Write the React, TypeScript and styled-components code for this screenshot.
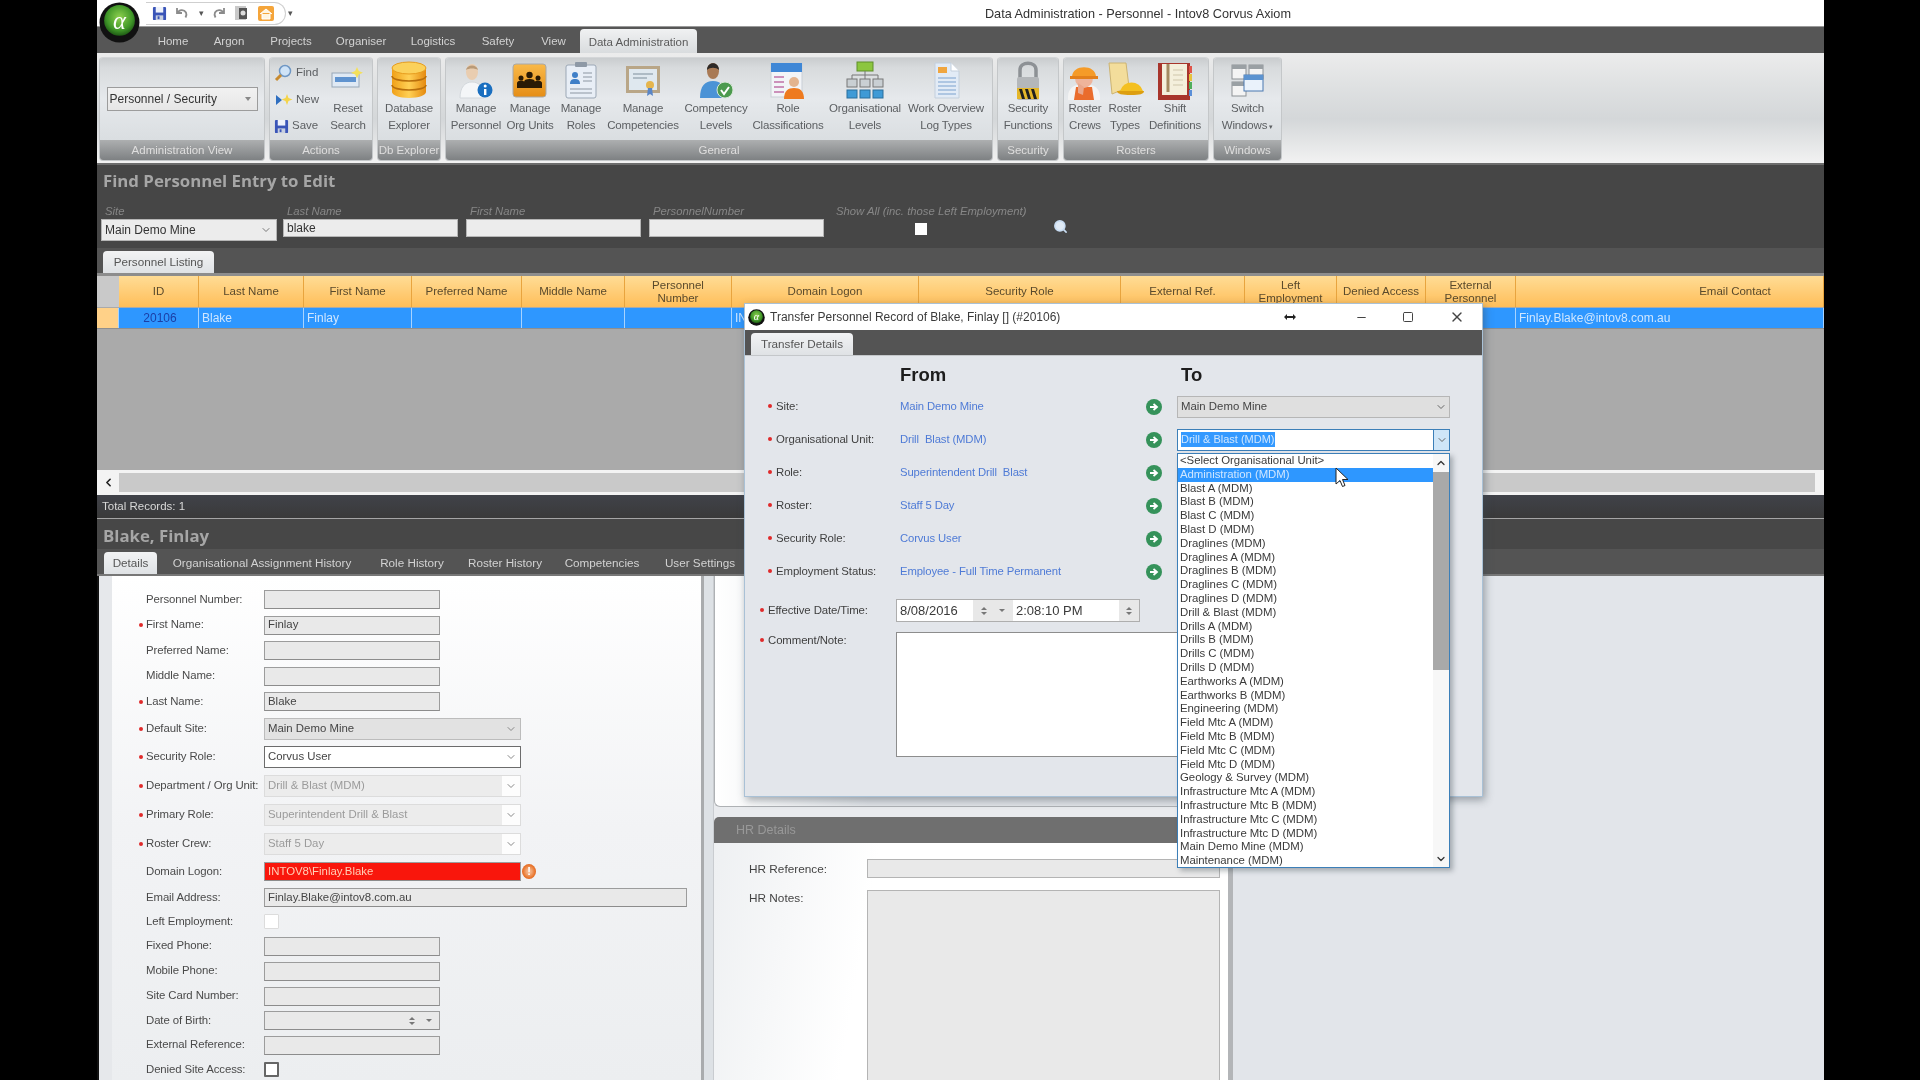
import React from "react";
import styled, { createGlobalStyle } from "styled-components";
import { ChevronDown, ChevronUp, ChevronLeft, Search, Minus, Square, X } from "lucide-react";

const Global = createGlobalStyle`
  html, body { margin: 0; padding: 0; background: #000; overflow: hidden; }
  * { box-sizing: border-box; }
`;
const Screen = styled.div`
  width: 1920px; height: 1080px; background: #000; padding-left: 97px; overflow: hidden;
`;
const Shell = styled.div`
  position: relative; width: 1727px; height: 1080px; display: flex; flex-direction: column;
  font: 12px/1.2 "Liberation Sans", Arial, sans-serif; color: #3c3c3c; background: #555;
  overflow: hidden; filter: blur(0.6px);
`;

/* title bar */
const TitleBar = styled.div`
  height: 27px; flex: none; background: #fff; display: flex; align-items: center; padding-left: 49px;
  border-bottom: 1px solid #9a9a9a;
`;
const LogoSpot = styled.div`position: absolute; left: 2px; top: 2px; width: 41px; height: 41px; z-index: 3;`;
const Qat = styled.div`
  height: 23px; width: 140px; border: 1px solid #cfcfcf; border-left: none; border-radius: 0 12px 12px 0;
  display: flex; align-items: center; gap: 8px; padding-left: 6px;
`;
const QatMore = styled.span`color: #555; font-size: 9px; margin-left: 2px;`;
const WindowTitle = styled.div`margin-left: auto; padding: 3px 533px 0 0; color: #333; font-size: 12.7px;`;

/* ribbon tabs */
const TabRow = styled.div`
  height: 26px; flex: none; background: #565656; display: flex; padding-left: 48px; align-items: flex-end;
`;
const RibbonTab = styled.div<{ $w: number; $on?: boolean }>`
  width: ${(p) => p.$w}px; height: ${(p) => (p.$on ? 24 : 26)}px; display: flex; align-items: center; justify-content: center;
  font-size: 11.5px; padding-top: 3px; color: ${(p) => (p.$on ? "#5a5a5a" : "#d2d2d2")};
  background: ${(p) => (p.$on ? "linear-gradient(#f0f1f2,#d9dcde)" : "transparent")};
  border-radius: ${(p) => (p.$on ? "4px 4px 0 0" : "0")};
`;

/* ribbon */
const Ribbon = styled.div`
  height: 110px; flex: none; display: flex; gap: 4px; padding: 4px 0 2px 2px;
  background: linear-gradient(#ececec 0%, #dfe1e2 30%, #d4d7d9 60%, #f2f2f2 100%);
`;
const Group = styled.div<{ $w: number }>`
  width: ${(p) => p.$w}px; display: flex; flex-direction: column; border-radius: 4px; overflow: hidden;
  border: 1px solid #c4c7c9; border-top-color: #d4d6d8;
`;
const GroupBody = styled.div<{ $pad?: number; $center?: boolean }>`
  flex: 1; display: flex; padding-left: ${(p) => p.$pad ?? 0}px;
  justify-content: ${(p) => (p.$center ? "center" : "flex-start")}; align-items: ${(p) => (p.$center ? "center" : "stretch")};
  background: linear-gradient(#c9ccce 0%, #d8dbdd 12%, #e6e9ec 50%, #dadee1 100%);
`;
const GroupLabel = styled.div`
  height: 20px; flex: none; display: flex; align-items: center; justify-content: center; font-size: 11.5px; color: #dedede; padding-top: 1px;
  background: linear-gradient(#adafb0, #7e8183); text-shadow: 0 0 1px #999;
`;
const RibbonItem = styled.div<{ $w: number }>`
  width: ${(p) => p.$w}px; display: flex; flex-direction: column; align-items: center; color: #5c5f62; font-size: 11.5px; white-space: nowrap;
`;
const IconBox = styled.div`height: 42px; flex: none; padding-top: 3px; display: flex; justify-content: center;`;
const Line = styled.div`height: 17px; line-height: 17px; letter-spacing: -0.15px;`;
const SmallCaret = styled.span`font-size: 7px; margin-left: 2px;`;
const ViewCombo = styled.div`
  width: 151px; height: 24px; border: 1px solid #9c9c9c; background: linear-gradient(#f1f1f1,#e6e6e6); display: flex; align-items: center;
  justify-content: space-between; padding: 0 6px 0 2px; color: #333; font-size: 12px;
`;
const Caret = styled.span`width: 0; height: 0; border-left: 3px solid transparent; border-right: 3px solid transparent; border-top: 4px solid #888;`;
const ActionCol = styled.div`width: 56px; padding: 6px 0 0 4px; display: flex; flex-direction: column; gap: 8px;`;
const ActionRow = styled.div`height: 18.5px; display: flex; align-items: center; gap: 3px; color: #5c5f62; font-size: 11.5px;`;
const ResetItem = styled(RibbonItem)`padding-top: 8px; margin-left: 0;`;
const ResetIcon = styled.div`height: 34px; flex: none;`;

/* find panel */
const FindPanel = styled.div`
  height: 85px; flex: none; background: #464646; border-top: 2px solid #6c6c6c; padding-left: 4px;
`;
const PanelHead = styled.div`
  height: 31px; display: flex; align-items: center; padding-left: 2px; font: 700 16.8px "Open Sans", "Noto Sans", sans-serif; color: #a6a6a6;
`;
const FindFields = styled.div`display: flex; align-items: flex-start; padding-top: 8px;`;
const FindField = styled.div<{ $w: number }>`width: ${(p) => p.$w}px; flex: none;`;
const FindLabel = styled.div`height: 15px; font-style: italic; font-size: 11.3px; color: #878787; padding-left: 4px; line-height: 15px; white-space: nowrap;`;
const FindInput = styled.div<{ $w: number; $h?: number }>`
  width: ${(p) => p.$w}px; height: ${(p) => p.$h ?? 18}px; background: #ececec; border: 1px solid #b5b5b5; color: #333; font-size: 12px;
  padding-left: 3px; display: flex; align-items: center; justify-content: space-between; padding-right: 4px;
`;
const ShowAllBox = styled.div`width: 12px; height: 12px; background: #fff; margin: 4px 0 0 83px;`;
const SearchSpot = styled.div`padding: 15px 0 0 71px; color: #c9ddf3;`;

const TabBand = styled.div<{ $bg?: string; $h: number; $pad: number }>`
  height: ${(p) => p.$h}px; flex: none; background: ${(p) => p.$bg ?? "#545454"}; display: flex; align-items: flex-end; padding-left: ${(p) => p.$pad}px;
`;
const SheetTab = styled.div<{ $w: number; $on?: boolean }>`
  width: ${(p) => p.$w}px; height: 22px; flex: none; display: flex; align-items: center; justify-content: center; font-size: 11.7px; white-space: nowrap;
  color: ${(p) => (p.$on ? "#555" : "#d2d2d2")};
  background: ${(p) => (p.$on ? "linear-gradient(#f2f3f4,#dfe2e5)" : "transparent")}; border-radius: 4px 4px 0 0;
`;

/* table */
const cols = "22px 80px 105px 108px 110px 103px 107px 187px 202px 124px 92px 89px 90px 308px";
const TableWrap = styled.div`height: 222px; flex: none; display: flex; flex-direction: column; background: #aaa; border-top: 3px solid #8d8d8d;`;
const HeaderRow = styled.div`display: grid; grid-template-columns: ${cols}; height: 31px; flex: none;`;
const HeadCell = styled.div<{ $corner?: boolean; $shift?: number }>`
  display: flex; align-items: center; justify-content: center; text-align: center; line-height: 13px; font-size: 11.5px; color: #5a4a2c;
  white-space: pre-line; padding-left: ${(p) => p.$shift ?? 0}px;
  background: ${(p) => (p.$corner ? "#c9c9c9" : "linear-gradient(#ffdc95,#ffbe59)")};
  border-right: 1px solid ${(p) => (p.$corner ? "#c9c9c9" : "#e8a43e")};
`;
const BodyRow = styled.div`
  display: grid; grid-template-columns: ${cols}; height: 21px; flex: none; margin-top: 1px; border-bottom: 1px solid #8f8f8f;
`;
const Cell = styled.div<{ $tone?: "id" | "marker" }>`
  display: flex; align-items: center; padding-left: 3px; font-size: 12px; white-space: nowrap; overflow: hidden;
  color: ${(p) => (p.$tone === "id" ? "#1c3fa6" : "#cfe6ff")};
  justify-content: ${(p) => (p.$tone === "id" ? "center" : "flex-start")};
  background: ${(p) => (p.$tone === "marker" ? "#ffd188" : "#2e97ff")};
  border-right: 1px solid #a7d3ff;
`;
const TableBody = styled.div`flex: 1; background: #aaa;`;
const ScrollRow = styled.div`height: 25px; flex: none; background: #f3f3f3; display: flex; align-items: center; padding-right: 9px; color: #222;`;
const ScrollArrow = styled.div`width: 22px; display: flex; justify-content: center;`;
const ScrollTrack = styled.div`flex: 1; height: 19px; background: #c9c9c9;`;

const TotalBar = styled.div`
  height: 24px; flex: none; background: linear-gradient(#404249, #3a3a3a); border-bottom: 1px solid #a5a5a5; color: #d8d8d8; font-size: 11.5px;
  display: flex; align-items: center; padding-left: 5px;
`;
const DetailHead = styled.div`
  height: 30px; flex: none; background: #474747; padding: 2px 0 0 6px; display: flex; align-items: center; font: 700 16.8px "Open Sans", "Noto Sans", sans-serif; color: #a6a6a6;
`;

/* details */
const DetailBody = styled.div`flex: 1; display: flex; min-height: 0; background: #e2e5ea; overflow: hidden; border-top: 2px solid #777;`;
const FormGutter = styled.div`width: 15px; flex: none; background: #e6e8eb; border-left: 2px solid #111;`;
const FormPanel = styled.div`width: 589px; flex: none; background: linear-gradient(#fff, #f2f3f5 50%, #eceef0); overflow: hidden; padding-left: 34px; padding-top: 11px;`;
const Splitter = styled.div`width: 13px; flex: none; background: #dde1e5; border-left: 3px solid #a9abad; border-right: 1px solid #c9ccd0;`;
const RightCol = styled.div`width: 519px; flex: none; display: flex; flex-direction: column; border-right: 5px solid #b3b5b8; background: #e9ebee;`;
const UpperPanel = styled.div`
  height: 231px; flex: none; background: linear-gradient(90deg,#fff,#dfe2e6 30%); border: 1px solid #aeb1b4; border-top: none; border-right: none; border-radius: 0 0 0 6px;
`;
const HrPanel = styled.div`flex: 1; margin-top: 10px; display: flex; flex-direction: column; min-height: 0;`;
const HrHead = styled.div`height: 26px; flex: none; background: #6f6f6f; border-radius: 5px 5px 0 0; color: #989898; font-size: 12.5px; display: flex; align-items: center; padding-left: 22px;`;
const HrBody = styled.div`
  flex: 1; background: linear-gradient(100deg,#eef0f2,#fff 30%); display: grid; grid-template-columns: 118px 353px; grid-auto-rows: min-content; row-gap: 12px; padding: 16px 0 0 35px; overflow: hidden;
`;
const HrLabel = styled.div<{ $up?: number }>`color: #444; font-size: 11.8px; line-height: 18px; padding-top: 1px; margin-top: ${(p) => -(p.$up ?? 0)}px;`;
const HrField = styled.div<{ $h: number }>`height: ${(p) => p.$h}px; background: #e9e9e9; border: 1px solid #b4b4b4;`;

const FormRow = styled.div<{ $h: number }>`height: ${(p) => p.$h}px; display: flex; align-items: center;`;
const FormLabel = styled.div<{ $req?: boolean }>`
  position: relative; width: 118px; flex: none; color: #4a4a4a; font-size: 11.4px; white-space: nowrap; letter-spacing: -0.1px;
  ${(p) => p.$req && `&::before { content: ""; position: absolute; left: -7px; top: 5px; width: 4px; height: 4px; border-radius: 50%; background: #e02a2a; }`}
`;
const TextBox = styled.div<{ $w: number; $bg?: string; $fg?: string }>`
  width: ${(p) => p.$w}px; height: 19px; display: flex; align-items: center; padding-left: 3px; font-size: 11.4px;
  background: ${(p) => p.$bg ?? "#e9e9e9"}; color: ${(p) => p.$fg ?? "#444"}; border: 1px solid #9c9c9c; border-bottom-color: #8c8c8c;
`;
const ComboBox = styled.div<{ $mode: "grey" | "white" | "off" }>`
  width: 257px; height: 22px; display: flex; align-items: center; justify-content: space-between; padding: 0 3px; font-size: 11.4px;
  color: ${(p) => (p.$mode === "off" ? "#9b9b9b" : "#444")};
  background: ${(p) => (p.$mode === "white" ? "#fff" : p.$mode === "grey" ? "#e2e2e2" : "linear-gradient(90deg,#ececec 93%,#fdfdfd 93%)")};
  border: 1px solid ${(p) => (p.$mode === "white" ? "#6c6c6c" : p.$mode === "grey" ? "#bcbcbc" : "#dcdcdc")};
`;
const ErrorDot = styled.div`
  width: 14px; height: 15px; border-radius: 50%; background: radial-gradient(#f4b183 20%, #e9762e 60%, #cf5518); margin-left: 1px;
  color: #fff; font: 700 11px/15px "Liberation Sans", sans-serif; text-align: center;
`;
const CheckBox = styled.div<{ $dark?: boolean }>`
  width: 15px; height: 15px; background: #fff; border: ${(p) => (p.$dark ? "2px solid #666" : "1px solid #dcdcdc")}; border-radius: 1px;
`;
const Spin = styled.div`display: flex; flex-direction: column; gap: 2px; align-items: center;`;
const Tri = styled.span<{ $down?: boolean }>`
  width: 0; height: 0; border-left: 3px solid transparent; border-right: 3px solid transparent;
  ${(p) => (p.$down ? "border-top: 3px solid #777;" : "border-bottom: 3px solid #777;")}
`;
const DobBox = styled(TextBox)`justify-content: flex-end; gap: 11px; padding-right: 7px;`;

/* dialog */
const Dialog = styled.div`
  position: absolute; left: 647px; top: 303px; width: 739px; height: 494px; z-index: 5; display: flex; flex-direction: column;
  background: #e3e6eb; border: 1px solid #a9c1d6; box-shadow: 2px 3px 8px rgba(60,70,80,.45);
`;
const DialogTitle = styled.div`
  height: 26px; flex: none; background: #fff; display: flex; align-items: center; padding-left: 3px; gap: 5px; font-size: 12px; color: #3b3b3b; position: relative;
`;
const DialogControls = styled.div`display: flex; align-items: center; margin-left: auto; color: #444;`;
const DialogControl = styled.div<{ $w: number }>`width: ${(p) => p.$w}px; display: flex; justify-content: center;`;
const DialogBand = styled.div`height: 26px; flex: none; background: #545454; display: flex; align-items: flex-end; padding-left: 6px; border-bottom: 1px solid #c4c7ca;`;
const HeadGrid = styled.div`height: 34px; flex: none; display: grid; grid-template-columns: 155px 281px 1fr; align-items: center; font-size: 18.5px; font-weight: 700; color: #1d1d1d; padding-top: 5px;`;
const TransferRow = styled.div`height: 33px; flex: none; display: grid; grid-template-columns: 155px 246px 16px 15px 273px; align-items: center;`;
const TransferLabel = styled.div<{ $left: number; $down?: number }>`
  position: relative; margin-left: ${(p) => p.$left}px; margin-top: ${(p) => p.$down ?? 0}px; color: #3f3f3f; font-size: 11.4px; white-space: nowrap; letter-spacing: -0.1px;
  &::before { content: ""; position: absolute; left: -8px; top: 4px; width: 4px; height: 4px; border-radius: 50%; background: #e02a2a; }
`;
const FromValue = styled.div`color: #4f7bd6; font-size: 11.3px; letter-spacing: -0.12px; white-space: pre; margin-top: 1px;`;
const GoArrow = styled.div`width: 16px; height: 16px; border-radius: 50%; background: #35925a; display: flex; align-items: center; justify-content: center;`;
const ToCombo = styled.div<{ $open?: boolean }>`
  grid-column: 5; height: 22px; display: flex; align-items: center; justify-content: space-between; font-size: 11.4px; padding-left: 3px;
  background: ${(p) => (p.$open ? "#fff" : "#dfdfdf")}; border: 1px solid ${(p) => (p.$open ? "#3c7fb8" : "#b6b6b6")}; color: #444;
`;
const Selected = styled.span`background: #3399ff; color: #cfe6ff; line-height: 15px; font-size: 11px;`;
const ComboBtn = styled.div<{ $open?: boolean }>`
  width: 16px; height: 100%; display: flex; align-items: center; justify-content: center; color: #666;
  ${(p) => p.$open && "background: #cfe6f8; border-left: 1px solid #3c7fb8;"}
`;
const DateRow = styled.div`height: 23px; margin-top: 11px; flex: none; display: flex; align-items: center;`;
const DateLabelCol = styled.div`width: 151px; flex: none;`;
const DateGroup = styled.div`width: 244px; height: 23px; display: flex; background: #e8e8e8; border: 1px solid #aeaeae; font-size: 13px; color: #3a3a3a;`;
const DatePart = styled.div<{ $w: number }>`width: ${(p) => p.$w}px; display: flex; align-items: center; padding-left: 3px; background: #fff; height: 100%;`;
const SpinCell = styled.div<{ $w: number }>`width: ${(p) => p.$w}px; display: flex; align-items: center; justify-content: center; gap: 12px;`;
const CommentRow = styled.div`margin-top: 10px; display: flex; align-items: flex-start;`;
const CommentBox = styled.div`width: 400px; height: 125px; background: #fff; border: 1px solid #8d8d8d;`;

const DropList = styled.div`
  position: absolute; left: 432px; top: 149px; width: 273px; height: 415px; background: #fff; border: 1px solid #3c7fb8; z-index: 6;
  box-shadow: 3px 3px 5px rgba(50,60,70,.35); display: flex; overflow: hidden;
`;
const Items = styled.div`width: 255px; flex: none;`;
const Item = styled.div<{ $on?: boolean }>`
  height: 13.8px; line-height: 13.8px; padding-left: 2px; font-size: 11.4px; white-space: nowrap; letter-spacing: -0.03px;
  color: ${(p) => (p.$on ? "#cfe6ff" : "#3a3a3a")}; background: ${(p) => (p.$on ? "#2e97ff" : "transparent")};
`;
const DropScroll = styled.div`width: 16px; flex: none; display: flex; flex-direction: column; color: #333; background: #f7f7f7;`;
const DropArrow = styled.div<{ $end?: boolean }>`height: ${(p) => (p.$end ? 16 : 18)}px; flex: none; display: flex; justify-content: center; align-items: center;`;
const DropThumb = styled.div`height: 198px; flex: none; background: #a9a9a9;`;
const DropRest = styled.div`flex: 1;`;
const Pointer = styled.svg`position: absolute; left: 1238px; top: 467px; z-index: 8;`;

/* --- icons --- */
const Alpha = ({ size, id }: { size: number; id: string }) => (
  <svg width={size} height={size} viewBox="0 0 40 40">
    <defs>
      <radialGradient id={id} cx="50%" cy="40%" r="60%">
        <stop offset="0" stopColor="#8fd14f" /><stop offset=".7" stopColor="#3f9628" /><stop offset="1" stopColor="#1e5a14" />
      </radialGradient>
    </defs>
    <circle cx="20" cy="20" r="19.5" fill="#111" />
    <circle cx="20" cy="18" r="15" fill={`url(#${id})`} />
    <text x="20" y="26" textAnchor="middle" fontSize="24" fontStyle="italic" fontFamily="Liberation Serif" fill="#fff">α</text>
  </svg>
);
const Floppy = ({ s = 15 }: { s?: number }) => (
  <svg width={s} height={s} viewBox="0 0 16 16">
    <rect x="1" y="1" width="14" height="14" rx="1" fill="#3a55b8" />
    <rect x="4" y="1" width="8" height="6" fill="#eef2fb" />
    <rect x="4" y="10" width="8" height="5" fill="#c7cfe0" />
    <rect x="6" y="11" width="2" height="3" fill="#3a55b8" />
  </svg>
);
const UndoIcon = ({ flip }: { flip?: boolean }) => (
  <svg width="14" height="14" viewBox="0 0 14 14" style={flip ? { transform: "scaleX(-1)" } : undefined}>
    <path d="M2 2v5h5M2.500 7C4 3.500 9 3 11 6.500c.8 1.500.5 3-.5 5" fill="none" stroke="#8b8b8b" strokeWidth="1.8" />
  </svg>
);
const QatDoc = () => (
  <svg width="15" height="16" viewBox="0 0 15 16">
    <rect x="1" y="1" width="11" height="14" fill="#c9c9c9" /><rect x="5" y="3" width="8" height="11" fill="#555" /><circle cx="9" cy="8" r="2.500" fill="#ddd" />
  </svg>
);
const QatHome = () => (
  <svg width="18" height="18" viewBox="0 0 18 18">
    <rect x="1" y="2" width="16" height="15" rx="2" fill="#f5a53a" />
    <path d="M3 10l6-5 6 5M5 9v6h8V9" fill="#fff5e0" stroke="#fff" strokeWidth="1" />
  </svg>
);
const DbIcon = () => (
  <svg width="38" height="38" viewBox="0 0 38 38">
    <defs>
      <linearGradient id="dbg" x1="0" x2="1"><stop offset="0" stopColor="#f0a018" /><stop offset=".5" stopColor="#ffd055" /><stop offset="1" stopColor="#e58a10" /></linearGradient>
    </defs>
    <path d="M2 7v24c0 3 7.500 6 17 6s17-3 17-6V7z" fill="url(#dbg)" />
    <ellipse cx="19" cy="7" rx="17" ry="6" fill="#fbd15b" stroke="#e79c1d" />
    <path d="M2 15c0 3 7.500 5 17 5s17-2 17-5M2 24c0 3 7.500 5 17 5s17-2 17-5" fill="none" stroke="#b86f0c" strokeWidth="1.6" />
  </svg>
);
const PersonInfo = () => (
  <svg width="38" height="38" viewBox="0 0 38 38">
    <ellipse cx="15" cy="11" rx="6" ry="8" fill="#e9cdb0" /><path d="M9 9c1-6 11-6 12 0-3-2-9-2-12 0z" fill="#b99a78" />
    <path d="M3 37c0-11 5-16 12-16s12 5 12 16z" fill="#f4f6f8" stroke="#d3d8dc" />
    <circle cx="28" cy="29" r="7.500" fill="#1a6fc0" /><rect x="27" y="28" width="2.400" height="6" fill="#fff" /><circle cx="28.200" cy="25" r="1.500" fill="#fff" />
  </svg>
);
const OrgUnits = () => (
  <svg width="38" height="38" viewBox="0 0 38 38">
    <defs><linearGradient id="oug" x1="0" y1="0" x2="0" y2="1"><stop offset="0" stopColor="#f9b949" /><stop offset="1" stopColor="#e58d16" /></linearGradient></defs>
    <rect x="2" y="3" width="33" height="33" rx="3" fill="url(#oug)" stroke="#a8a8a8" />
    <g fill="#2a1a05"><circle cx="18.500" cy="14" r="3.200" /><path d="M13 27v-6c0-2 2-3 5.500-3s5.500 1 5.500 3v6z" /><circle cx="10" cy="17" r="2.500" /><path d="M6 27v-5c0-1.500 2-2.500 4-2.500s3 .5 3 1.500v6z" /><circle cx="27" cy="17" r="2.500" /><path d="M31 27v-5c0-1.500-2-2.500-4-2.500s-3 .5-3 1.500v6z" /></g>
  </svg>
);
const Roles = () => (
  <svg width="38" height="38" viewBox="0 0 38 38">
    <rect x="4" y="4" width="30" height="33" rx="2" fill="#e8eef6" stroke="#9ba7b5" />
    <rect x="13" y="1" width="12" height="5" rx="1" fill="#8e99a6" />
    <circle cx="13" cy="14" r="3" fill="#3f7fc7" /><path d="M8 23c0-4 2-5 5-5s5 1 5 5z" fill="#3f7fc7" />
    <path d="M21 12h9M21 16h9M21 20h9M8 28h22M8 32h22" stroke="#aab4bf" strokeWidth="1.500" />
  </svg>
);
const Cert = () => (
  <svg width="38" height="38" viewBox="0 0 38 38">
    <rect x="2" y="5" width="34" height="27" fill="#b9a687" /><rect x="5" y="8" width="28" height="21" fill="#dfe8ef" />
    <path d="M9 13h20M9 17h14" stroke="#7f8e9c" strokeWidth="1.200" />
    <circle cx="26" cy="24" r="4" fill="#e5b54d" /><path d="M24 27l-1 8 3-2 3 2-1-8z" fill="#5b86c5" />
  </svg>
);
const Comp = () => (
  <svg width="38" height="38" viewBox="0 0 38 38">
    <ellipse cx="16" cy="10" rx="6" ry="8" fill="#a97a55" /><path d="M10 9c0-9 12-9 12 0-3-3-9-3-12 0z" fill="#2d2a28" />
    <path d="M3 37c0-12 5-17 13-17s13 5 13 17z" fill="#4b93d6" />
    <circle cx="28" cy="29" r="8" fill="#4c9a4e" stroke="#d8e7d8" /><path d="M24 29l3 4 5-7" fill="none" stroke="#fff" strokeWidth="2" />
  </svg>
);
const RoleClass = () => (
  <svg width="38" height="40" viewBox="0 0 38 40">
    <rect x="2" y="2" width="31" height="34" fill="#f2f4f7" stroke="#c9cfd6" /><rect x="2" y="2" width="31" height="9" fill="#3f87d6" />
    <path d="M5 16h10M5 21h10M5 26h10M5 31h10" stroke="#c070a8" strokeWidth="1.500" />
    <circle cx="25" cy="21" r="5" fill="#e3b48f" /><path d="M15 38c0-8 4-11 10-11s10 3 10 11z" fill="#ee7a1f" />
  </svg>
);
const OrgLevels = () => (
  <svg width="38" height="38" viewBox="0 0 38 38">
    <rect x="11" y="1" width="16" height="9" fill="#8cc63f" stroke="#5f8f2a" />
    <path d="M19 10v4M6 18v-4h26v4M19 14v4" stroke="#777" fill="none" />
    <g fill="#c9cfd3" stroke="#777"><rect x="1" y="18" width="10" height="8" /><rect x="14" y="18" width="10" height="8" /><rect x="27" y="18" width="10" height="8" /></g>
    <g fill="#3f9ad6" stroke="#2a6f9c"><rect x="1" y="29" width="10" height="8" /><rect x="14" y="29" width="10" height="8" /><rect x="27" y="29" width="10" height="8" /></g>
  </svg>
);
const WorkLog = () => (
  <svg width="38" height="40" viewBox="0 0 38 40">
    <path d="M8 2h16l8 8v27H8z" fill="#e2ebf6" stroke="#c3cfdc" /><path d="M24 2v8h8" fill="#fff" stroke="#c3cfdc" />
    <rect x="11" y="6" width="9" height="6" fill="#f0a640" />
    <path d="M11 17h18M11 21h18M11 25h18M11 29h18M11 33h18" stroke="#9dbbdc" strokeWidth="1.400" />
  </svg>
);
const Lock = () => (
  <svg width="38" height="40" viewBox="0 0 38 40">
    <path d="M11 18V9c0-9 16-9 16 0v9" fill="none" stroke="#8d9195" strokeWidth="3.500" />
    <rect x="8" y="16" width="22" height="23" rx="2" fill="#b4b7ba" />
    <rect x="8" y="27" width="22" height="11" fill="#e4b62a" />
    <path d="M10 28l3 10h3l-3-10zM16 28l3 10h3l-3-10zM22 28l3 10h3l-3-10z" fill="#1f1f1f" />
  </svg>
);
const Crew = () => (
  <svg width="38" height="40" viewBox="0 0 38 40">
    <path d="M2 36c0-9 6-13 16-13s16 4 16 13v3H2z" fill="#f3f3f3" /><path d="M10 26h16l2 13H8z" fill="#ea6c2c" />
    <ellipse cx="18" cy="17" rx="9" ry="10" fill="#eeb49b" />
    <path d="M6 16C6 3 30 3 30 16z" fill="#f59b28" /><path d="M4 15h28v3H4z" fill="#e3801b" />
    <path d="M12 22v10l5 2 1-8z" fill="#e9a78c" />
  </svg>
);
const RosterTypes = () => (
  <svg width="38" height="40" viewBox="0 0 38 40">
    <path d="M3 2h17l3 24-17 7z" fill="#f3dd9b" stroke="#cdb472" />
    <path d="M14 30a12 12 0 0 1 23 0z" fill="#f4c020" /><path d="M11 30h27c0 3-4 4-13 4s-14-1-14-4z" fill="#dd9f10" />
  </svg>
);
const Shift = () => (
  <svg width="38" height="40" viewBox="0 0 38 40">
    <rect x="2" y="2" width="32" height="37" fill="#a8352c" /><rect x="6" y="3" width="25" height="31" fill="#f4efdc" />
    <path d="M12 3v28" stroke="#a48a62" strokeWidth="3" /><path d="M17 9h10M17 14h10M17 19h10M17 24h10" stroke="#cfc6ab" />
    <rect x="33" y="5" width="3" height="7" fill="#e0554a" /><rect x="33" y="13" width="3" height="7" fill="#e6c23c" /><rect x="33" y="21" width="3" height="7" fill="#4fae5c" /><rect x="33" y="29" width="3" height="6" fill="#5a8fd8" />
  </svg>
);
const Switch = () => (
  <svg width="38" height="38" viewBox="0 0 38 38">
    <rect x="3" y="4" width="14" height="14" fill="#f4f4f4" stroke="#8d9296" /><rect x="3" y="4" width="14" height="4" fill="#9aa0a4" />
    <rect x="20" y="4" width="14" height="14" fill="#f4f4f4" stroke="#8d9296" /><rect x="20" y="4" width="14" height="4" fill="#9aa0a4" />
    <rect x="3" y="21" width="14" height="14" fill="#f4f4f4" stroke="#8d9296" /><rect x="3" y="21" width="14" height="4" fill="#9aa0a4" />
    <rect x="15" y="14" width="19" height="16" fill="#eaf2fb" stroke="#4a78b0" /><rect x="15" y="14" width="19" height="5" fill="#5c93d0" />
  </svg>
);
const FindIcon = () => (
  <svg width="19" height="19" viewBox="0 0 19 19">
    <circle cx="11" cy="7" r="5.500" fill="#cfe3f7" stroke="#6f97c4" strokeWidth="1.500" /><path d="M7 11l-5 5" stroke="#c88a2e" strokeWidth="3" />
  </svg>
);
const NewIcon = () => (
  <svg width="19" height="14" viewBox="0 0 19 14">
    <path d="M2 2l6 5-6 5z" fill="#2f6fc0" /><path d="M13 1l1.500 4 4 1.500-4 1.500-1.500 4-1.500-4-4-1.500 4-1.500z" fill="#f4d44a" />
  </svg>
);
const ResetGlyph = () => (
  <svg width="34" height="24" viewBox="0 0 34 24">
    <rect x="1" y="7" width="27" height="14" fill="#dfe9f4" stroke="#97a7b8" /><rect x="4" y="11" width="21" height="5" fill="#5f93cf" />
    <path d="M26 1l1.800 4 4.200 1.800-4.200 1.800-1.800 4-1.800-4-4.200-1.800 4.200-1.800z" fill="#f4e05a" />
  </svg>
);
const ArrowGlyph = () => (
  <svg width="10" height="10" viewBox="0 0 10 10"><path d="M1 5h6M4.500 2L8 5 4.500 8" fill="none" stroke="#fff" strokeWidth="1.800" /></svg>
);

/* --- data --- */
const ribbonTabs: [string, number][] = [["Home", 56], ["Argon", 56], ["Projects", 68], ["Organiser", 72], ["Logistics", 72], ["Safety", 58], ["View", 53]];
type RI = { a: string; b: React.ReactNode; w: number; icon: React.ReactNode };
const general: RI[] = [
  { a: "Manage", b: "Personnel", w: 54, icon: <PersonInfo /> },
  { a: "Manage", b: "Org Units", w: 54, icon: <OrgUnits /> },
  { a: "Manage", b: "Roles", w: 48, icon: <Roles /> },
  { a: "Manage", b: "Competencies", w: 76, icon: <Cert /> },
  { a: "Competency", b: "Levels", w: 70, icon: <Comp /> },
  { a: "Role", b: "Classifications", w: 74, icon: <RoleClass /> },
  { a: "Organisational", b: "Levels", w: 80, icon: <OrgLevels /> },
  { a: "Work Overview", b: "Log Types", w: 82, icon: <WorkLog /> },
];
const rosters: RI[] = [
  { a: "Roster", b: "Crews", w: 40, icon: <Crew /> },
  { a: "Roster", b: "Types", w: 40, icon: <RosterTypes /> },
  { a: "Shift", b: "Definitions", w: 60, icon: <Shift /> },
];
const Big = ({ i }: { i: RI }) => (
  <RibbonItem $w={i.w}><IconBox>{i.icon}</IconBox><Line>{i.a}</Line><Line>{i.b}</Line></RibbonItem>
);

const headers = ["", "ID", "Last Name", "First Name", "Preferred Name", "Middle Name", "Personnel\nNumber", "Domain Logon", "Security Role", "External Ref.", "Left\nEmployment", "Denied Access", "External\nPersonnel", "Email Contact"];
const rowCells = ["20106", "Blake", "Finlay", "", "", "", "IN", "", "", "", "", "", "Finlay.Blake@intov8.com.au"];
const detailTabs: [string, number][] = [["Organisational Assignment History", 198], ["Role History", 102], ["Roster History", 84], ["Competencies", 110], ["User Settings", 86]];

type F = { l: string; r?: boolean; h: number; k: "text" | "grey" | "white" | "off" | "err" | "wide" | "check" | "dark" | "dob"; v?: string };
const fields: F[] = [
  { l: "Personnel Number:", h: 25.25, k: "text" },
  { l: "First Name:", r: true, h: 25.5, k: "text", v: "Finlay" },
  { l: "Preferred Name:", h: 25.5, k: "text" },
  { l: "Middle Name:", h: 25.5, k: "text" },
  { l: "Last Name:", r: true, h: 26.25, k: "text", v: "Blake" },
  { l: "Default Site:", r: true, h: 28, k: "grey", v: "Main Demo Mine" },
  { l: "Security Role:", r: true, h: 28.5, k: "white", v: "Corvus User" },
  { l: "Department / Org Unit:", r: true, h: 28.5, k: "off", v: "Drill & Blast (MDM)" },
  { l: "Primary Role:", r: true, h: 29, k: "off", v: "Superintendent Drill & Blast" },
  { l: "Roster Crew:", r: true, h: 29, k: "off", v: "Staff 5 Day" },
  { l: "Domain Logon:", h: 27.25, k: "err", v: "INTOV8\\Finlay.Blake" },
  { l: "Email Address:", h: 24.5, k: "wide", v: "Finlay.Blake@intov8.com.au" },
  { l: "Left Employment:", h: 24, k: "check" },
  { l: "Fixed Phone:", h: 24.75, k: "text" },
  { l: "Mobile Phone:", h: 25.25, k: "text" },
  { l: "Site Card Number:", h: 25, k: "text" },
  { l: "Date of Birth:", h: 24.25, k: "dob" },
  { l: "External Reference:", h: 24.25, k: "text" },
  { l: "Denied Site Access:", h: 24.25, k: "dark" },
];
const SpinUD = () => (<Spin><Tri /><Tri $down /></Spin>);
const Control = ({ f }: { f: F }) => {
  switch (f.k) {
    case "text": return <TextBox $w={176}>{f.v}</TextBox>;
    case "wide": return <TextBox $w={423}>{f.v}</TextBox>;
    case "err": return (<><TextBox $w={257} $bg="#f9160c" $fg="#ffd0b8">{f.v}</TextBox><ErrorDot>!</ErrorDot></>);
    case "check": return <CheckBox />;
    case "dark": return <CheckBox $dark />;
    case "dob": return <DobBox $w={176}><SpinUD /><Tri $down /></DobBox>;
    default: return <ComboBox $mode={f.k}>{f.v}<ChevronDown size={12} color="#888" /></ComboBox>;
  }
};

const transfers = [
  ["Site:", "Main Demo Mine"], ["Organisational Unit:", "Drill  Blast (MDM)"], ["Role:", "Superintendent Drill  Blast"],
  ["Roster:", "Staff 5 Day"], ["Security Role:", "Corvus User"], ["Employment Status:", "Employee - Full Time Permanent"],
];
const units = ["<Select Organisational Unit>", "Administration (MDM)", "Blast A (MDM)", "Blast B (MDM)", "Blast C (MDM)", "Blast D (MDM)", "Draglines (MDM)", "Draglines A (MDM)", "Draglines B (MDM)", "Draglines C (MDM)", "Draglines D (MDM)", "Drill & Blast (MDM)", "Drills A (MDM)", "Drills B (MDM)", "Drills C (MDM)", "Drills D (MDM)", "Earthworks A (MDM)", "Earthworks B (MDM)", "Engineering (MDM)", "Field Mtc A (MDM)", "Field Mtc B (MDM)", "Field Mtc C (MDM)", "Field Mtc D (MDM)", "Geology & Survey (MDM)", "Infrastructure Mtc A (MDM)", "Infrastructure Mtc B (MDM)", "Infrastructure Mtc C (MDM)", "Infrastructure Mtc D (MDM)", "Main Demo Mine (MDM)", "Maintenance (MDM)"];

export default function App() {
  return (
    <Screen>
      <Global />
      <Shell>
        <LogoSpot><Alpha size={41} id="logoA" /></LogoSpot>
        <TitleBar>
          <Qat><Floppy /><UndoIcon /><QatMore>▾</QatMore><UndoIcon flip /><QatDoc /><QatHome /></Qat>
          <QatMore>▾</QatMore>
          <WindowTitle>Data Administration - Personnel - Intov8 Corvus Axiom</WindowTitle>
        </TitleBar>
        <TabRow>
          {ribbonTabs.map(([t, w]) => <RibbonTab key={t} $w={w}>{t}</RibbonTab>)}
          <RibbonTab $w={117} $on>Data Administration</RibbonTab>
        </TabRow>
        <Ribbon>
          <Group $w={166}>
            <GroupBody $center><ViewCombo>Personnel / Security<Caret /></ViewCombo></GroupBody>
            <GroupLabel>Administration View</GroupLabel>
          </Group>
          <Group $w={104}>
            <GroupBody>
              <ActionCol>
                <ActionRow><FindIcon />Find</ActionRow>
                <ActionRow><NewIcon />New</ActionRow>
                <ActionRow><Floppy />Save</ActionRow>
              </ActionCol>
              <ResetItem $w={44}><ResetIcon><ResetGlyph /></ResetIcon><Line>Reset</Line><Line>Search</Line></ResetItem>
            </GroupBody>
            <GroupLabel>Actions</GroupLabel>
          </Group>
          <Group $w={64}>
            <GroupBody><Big i={{ a: "Database", b: "Explorer", w: 62, icon: <DbIcon /> }} /></GroupBody>
            <GroupLabel>Db Explorer</GroupLabel>
          </Group>
          <Group $w={548}>
            <GroupBody $pad={3}>{general.map((i) => <Big key={i.a + String(i.b)} i={i} />)}</GroupBody>
            <GroupLabel>General</GroupLabel>
          </Group>
          <Group $w={62}>
            <GroupBody><Big i={{ a: "Security", b: "Functions", w: 60, icon: <Lock /> }} /></GroupBody>
            <GroupLabel>Security</GroupLabel>
          </Group>
          <Group $w={146}>
            <GroupBody $pad={1}>{rosters.map((i) => <Big key={i.a + String(i.b)} i={i} />)}</GroupBody>
            <GroupLabel>Rosters</GroupLabel>
          </Group>
          <Group $w={69}>
            <GroupBody><Big i={{ a: "Switch", b: <>Windows<SmallCaret>▾</SmallCaret></>, w: 67, icon: <Switch /> }} /></GroupBody>
            <GroupLabel>Windows</GroupLabel>
          </Group>
        </Ribbon>

        <FindPanel>
          <PanelHead>Find Personnel Entry to Edit</PanelHead>
          <FindFields>
            <FindField $w={182}><FindLabel>Site</FindLabel><FindInput $w={176} $h={22}>Main Demo Mine<ChevronDown size={12} color="#777" /></FindInput></FindField>
            <FindField $w={183}><FindLabel>Last Name</FindLabel><FindInput $w={175}>blake</FindInput></FindField>
            <FindField $w={183}><FindLabel>First Name</FindLabel><FindInput $w={175} /></FindField>
            <FindField $w={183}><FindLabel>PersonnelNumber</FindLabel><FindInput $w={175} /></FindField>
            <FindField $w={150}><FindLabel>Show All (inc. those Left Employment)</FindLabel><ShowAllBox /></FindField>
            <SearchSpot><Search size={15} strokeWidth={2.6} fill="#dfeaf6" /></SearchSpot>
          </FindFields>
        </FindPanel>
        <TabBand $h={25} $pad={6}><SheetTab $w={111} $on>Personnel Listing</SheetTab></TabBand>

        <TableWrap>
          <HeaderRow>
            {headers.map((h, i) => <HeadCell key={i} $corner={i === 0} $shift={i === 13 ? 131 : 0}>{h}</HeadCell>)}
          </HeaderRow>
          <BodyRow>
            <Cell $tone="marker" />
            {rowCells.map((c, i) => <Cell key={i} $tone={i === 0 ? "id" : undefined}>{c}</Cell>)}
          </BodyRow>
          <TableBody />
          <ScrollRow><ScrollArrow><ChevronLeft size={13} strokeWidth={3} /></ScrollArrow><ScrollTrack /></ScrollRow>
        </TableWrap>
        <TotalBar>Total Records: 1</TotalBar>
        <DetailHead>Blake, Finlay</DetailHead>
        <TabBand $h={25} $pad={7}>
          <SheetTab $w={53} $on>Details</SheetTab>
          <SheetTab $w={6} />
          {detailTabs.map(([t, w]) => <SheetTab key={t} $w={w}>{t}</SheetTab>)}
        </TabBand>

        <DetailBody>
          <FormGutter />
          <FormPanel>
            {fields.map((f) => (
              <FormRow key={f.l} $h={f.h}>
                <FormLabel $req={f.r}>{f.l}</FormLabel>
                <Control f={f} />
              </FormRow>
            ))}
          </FormPanel>
          <Splitter />
          <RightCol>
            <UpperPanel />
            <HrPanel>
              <HrHead>HR Details</HrHead>
              <HrBody>
                <HrLabel>HR Reference:</HrLabel><HrField $h={19} />
                <HrLabel $up={2}>HR Notes:</HrLabel><HrField $h={300} />
              </HrBody>
            </HrPanel>
          </RightCol>
        </DetailBody>

        <Dialog>
          <DialogTitle>
            <Alpha size={17} id="logoB" />
            Transfer Personnel Record of Blake, Finlay [] (#20106)
            <DialogControls>
              <DialogControl $w={96}>
                <svg width="12" height="8" viewBox="0 0 12 8"><path d="M0 4l3-3v2h6V1l3 3-3 3V5H3v2z" fill="#222" /></svg>
              </DialogControl>
              <DialogControl $w={46}><Minus size={13} /></DialogControl>
              <DialogControl $w={48}><Square size={12} /></DialogControl>
              <DialogControl $w={50}><X size={16} /></DialogControl>
            </DialogControls>
          </DialogTitle>
          <DialogBand><SheetTab $w={102} $on>Transfer Details</SheetTab></DialogBand>
          <HeadGrid><span /><span>From</span><span>To</span></HeadGrid>
          {transfers.map(([l, v], i) => (
            <TransferRow key={l}>
              <TransferLabel $left={31}>{l}</TransferLabel>
              <FromValue>{v}</FromValue>
              <GoArrow><ArrowGlyph /></GoArrow>
              {i < 2 && (
                <ToCombo $open={i === 1}>
                  {i === 0 ? "Main Demo Mine" : <Selected>Drill & Blast (MDM)</Selected>}
                  <ComboBtn $open={i === 1}><ChevronDown size={12} /></ComboBtn>
                </ToCombo>
              )}
            </TransferRow>
          ))}
          <DateRow>
            <DateLabelCol><TransferLabel $left={23}>Effective Date/Time:</TransferLabel></DateLabelCol>
            <DateGroup>
              <DatePart $w={76}>8/08/2016</DatePart>
              <SpinCell $w={40}><SpinUD /><Tri $down /></SpinCell>
              <DatePart $w={106}>2:08:10 PM</DatePart>
              <SpinCell $w={20}><SpinUD /></SpinCell>
            </DateGroup>
          </DateRow>
          <CommentRow>
            <DateLabelCol><TransferLabel $left={23} $down={2}>Comment/Note:</TransferLabel></DateLabelCol>
            <CommentBox />
          </CommentRow>
          <DropList>
            <Items>{units.map((u, i) => <Item key={u} $on={i === 1}>{u}</Item>)}</Items>
            <DropScroll>
              <DropArrow><ChevronUp size={12} strokeWidth={2.5} /></DropArrow>
              <DropThumb />
              <DropRest />
              <DropArrow $end><ChevronDown size={12} strokeWidth={2.5} /></DropArrow>
            </DropScroll>
          </DropList>
        </Dialog>
        <Pointer width="14" height="21" viewBox="0 0 14 21">
          <path d="M1 1v16l4-3.500 2.500 6 2.500-1-2.500-6H13z" fill="#fff" stroke="#222" strokeWidth="1" />
        </Pointer>
      </Shell>
    </Screen>
  );
}
